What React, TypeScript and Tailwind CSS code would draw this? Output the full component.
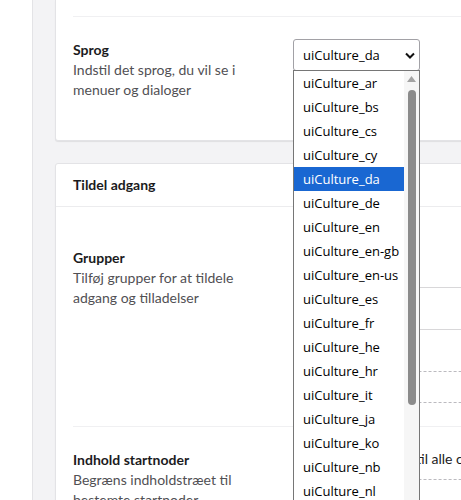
import React from 'react';

const cultures = [
  'ar', 'bs', 'cs', 'cy', 'da', 'de', 'en', 'en-gb', 'en-us', 'es', 'fr', 'he',
  'hr', 'it', 'ja', 'ko', 'nb', 'nl', 'pl', 'pt', 'ru', 'sv', 'tr', 'zh',
];

function LanguageSelect({ value }: { value: string }) {
  return (
    <div className="relative w-[127px]">
      {/* Closed select */}
      <div className="flex h-[32px] items-center justify-between rounded-[3px] border border-[#a2a1a6] bg-white pl-[9px] pr-[4px] font-['Open_Sans',sans-serif] text-[13px] text-black">
        <span>uiCulture_{value}</span>
        <svg width="10" height="7" viewBox="0 0 10 7" fill="none">
          <path d="M1 1.5 5 5.5 9 1.5" stroke="#111" strokeWidth="2" />
        </svg>
      </div>

      {/* Open option list */}
      <div className="absolute left-0 top-[31px] z-10 flex h-[460px] w-[127px] overflow-hidden border border-[#767676] bg-white font-['Open_Sans',sans-serif] text-[13px] text-black">
        <ul className="flex-1">
          {cultures.map((c) => (
            <li
              key={c}
              className={`flex h-[24px] items-center pl-[9px] ${
                c === value ? 'bg-[#1967d2] text-white' : ''
              }`}
            >
              uiCulture_{c}
            </li>
          ))}
        </ul>
        <div className="flex w-[15px] flex-col items-center bg-[#f6f6f6] pt-[5px]">
          <svg width="9" height="6" viewBox="0 0 9 6">
            <path d="M4.5 0 9 6H0z" fill="#a3a3a3" />
          </svg>
          <div className="mt-[8px] h-[315px] w-[8px] rounded-full bg-[#8b8b8b]" />
        </div>
      </div>
    </div>
  );
}

function Field({ title, lines }: { title: string; lines: string[] }) {
  return (
    <div className="w-[220px] shrink-0">
      <div className="font-bold text-[#1b1b1d]">{title}</div>
      {lines.map((l) => (
        <div key={l} className="text-[#515054]">
          {l}
        </div>
      ))}
    </div>
  );
}

export default function App() {
  return (
    <div className="flex h-[500px] w-[461px] overflow-hidden bg-white font-['Lato',sans-serif] text-[14px] leading-[20px]">
      <div className="w-[33px] shrink-0 border-r border-[#e3e3e6] bg-white" />

      <div className="min-w-0 flex-1 bg-[#f3f3f5] pl-[22px]">
        {/* Settings card (top cut off) */}
        <div className="w-[520px] rounded-b-[3px] border border-t-0 border-[#e3e3e6] bg-white px-[17px] shadow-[0_1px_1px_rgba(0,0,0,0.08)]">
          <div className="h-[17px] border-b border-[#f0f0f2]" />
          <div className="flex pt-[23px] pb-[40px]">
            <Field title="Sprog" lines={['Indstil det sprog, du vil se i', 'menuer og dialoger']} />
            <div className="-mt-[1px]">
              <LanguageSelect value="da" />
            </div>
          </div>
        </div>

        {/* Access card */}
        <div className="mt-[22px] w-[520px] rounded-[3px] border border-[#e3e3e6] bg-white shadow-[0_1px_1px_rgba(0,0,0,0.08)]">
          <div className="flex h-[43px] items-center border-b border-[#ececee] px-[17px] font-bold text-[#1b1b1d]">
            Tildel adgang
          </div>
          <div className="px-[17px]">
            <div className="flex border-b border-[#f0f0f2] pt-[41px] pb-[23px]">
              <Field title="Grupper" lines={['Tilføj grupper for at tildele', 'adgang og tilladelser']} />
              <div className="flex-1 pt-[39px]">
                <div className="h-[43px] border-y border-[#d8d7d9]" />
                <div className="mt-[41px] h-[32px] border border-dashed border-[#bbbabf]" />
              </div>
            </div>
            <div className="flex pt-[23px]">
              <Field title="Indhold startnoder" lines={['Begræns indholdstræet til', 'bestemte startnoder']} />
              <div className="-mt-[1px] flex-1">
                <div className="whitespace-nowrap text-[#1b1b1d]">Brugere har adgang til alle content noder</div>
                <div className="mt-[10px] h-[32px] border border-dashed border-[#bbbabf]" />
              </div>
            </div>
          </div>
        </div>
      </div>
    </div>
  );
}
